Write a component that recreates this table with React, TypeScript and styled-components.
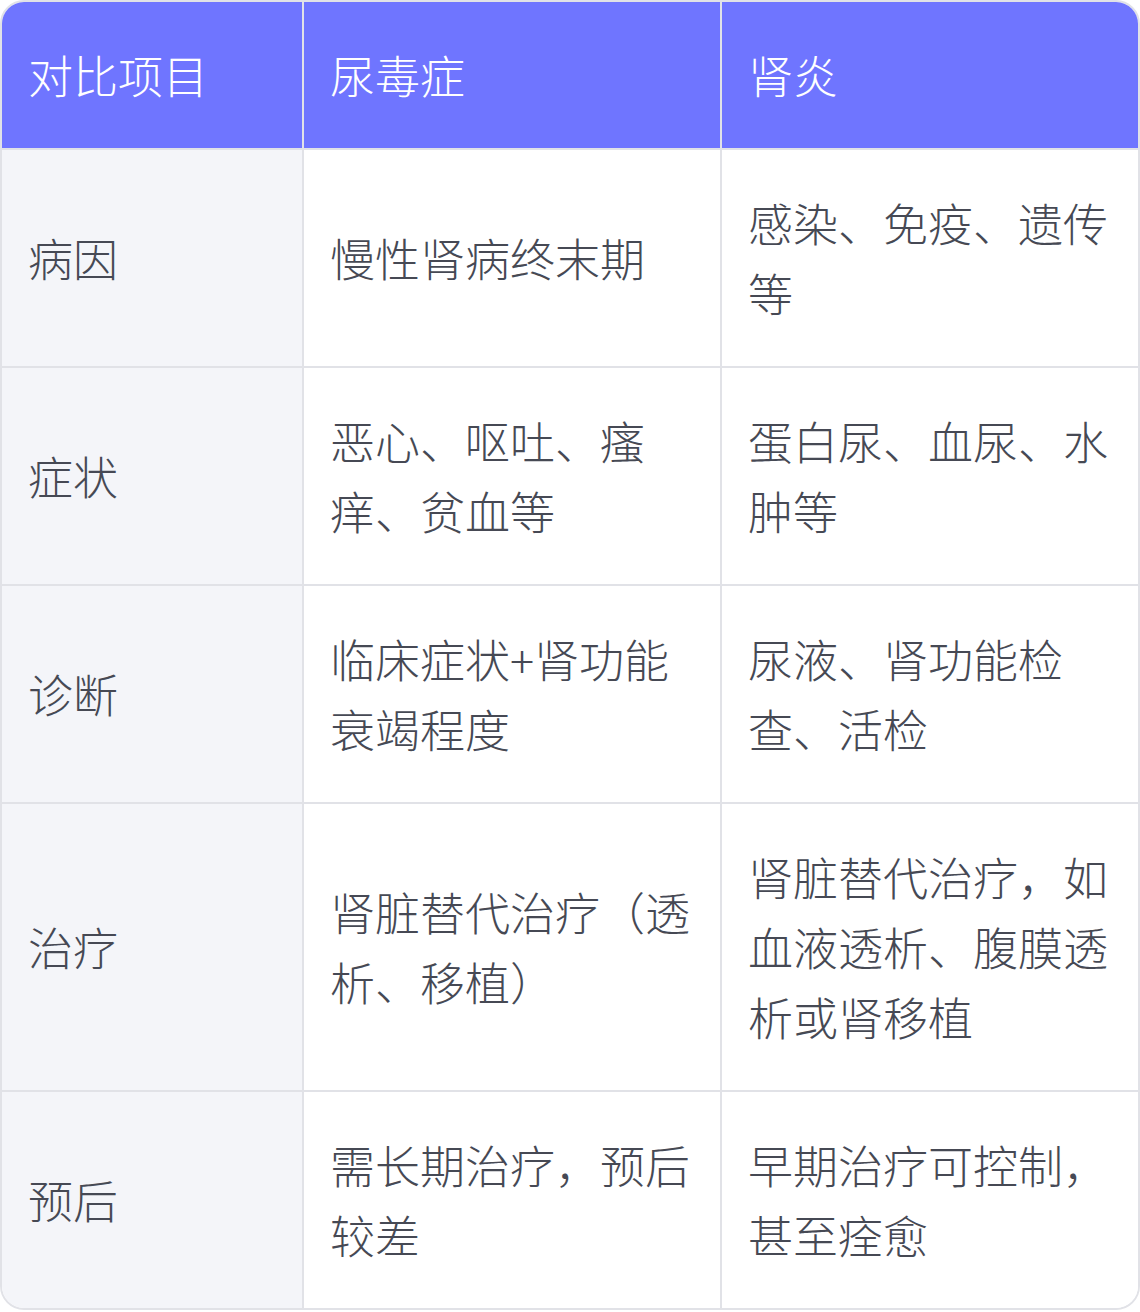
import React from "react";
import styled, { createGlobalStyle } from "styled-components";

const Global = createGlobalStyle`
  html, body { margin: 0; padding: 0; background: #ffffff; }
  body { font-family: "Noto Sans CJK SC", "Noto Sans", sans-serif; }
`;

const Table = styled.div`
  width: 1140px;
  box-sizing: border-box;
  border: 2px solid #e1e2e7;
  border-radius: 24px;
  overflow: hidden;
  display: grid;
  grid-template-columns: 302px 418px 1fr;
  background: #ffffff;
`;

const Cell = styled.div<{ $head?: boolean; $first?: boolean; $lastCol?: boolean; $lastRow?: boolean }>`
  box-sizing: border-box;
  padding: 38px 24px 38px 26px;
  display: flex;
  align-items: center;
  font-size: 45px;
  line-height: 70px;
  font-weight: 300;
  color: ${(p) => (p.$head ? "#ffffff" : "#464954")};
  background: ${(p) => (p.$head ? "#6f75ff" : p.$first ? "#f4f5f9" : "#ffffff")};
  border-right: ${(p) => (p.$lastCol ? "none" : "2px solid #e1e2e7")};
  border-bottom: ${(p) => (p.$lastRow ? "none" : "2px solid #e1e2e7")};
  word-break: normal;
  line-break: strict;
`;

const CellText = styled.span`
  display: block;
  width: 100%;
`;

const header = ["对比项目", "尿毒症", "肾炎"];
const rows: string[][] = [
  ["病因", "慢性肾病终末期", "感染、免疫、遗传等"],
  ["症状", "恶心、呕吐、瘙痒、贫血等", "蛋白尿、血尿、水肿等"],
  ["诊断", "临床症状+肾功能衰竭程度", "尿液、肾功能检查、活检"],
  ["治疗", "肾脏替代治疗（透析、移植）", "肾脏替代治疗，如血液透析、腹膜透析或肾移植"],
  ["预后", "需长期治疗，预后较差", "早期治疗可控制，甚至痊愈"],
];

export default function App() {
  return (
    <>
      <Global />
      <Table>
        {header.map((h, i) => (
          <Cell key={h} $head $lastCol={i === 2}>
            <CellText>{h}</CellText>
          </Cell>
        ))}
        {rows.map((r, ri) =>
          r.map((c, ci) => (
            <Cell
              key={`${ri}-${ci}`}
              $first={ci === 0}
              $lastCol={ci === 2}
              $lastRow={ri === rows.length - 1}
            >
              <CellText>{c}</CellText>
            </Cell>
          ))
        )}
      </Table>
    </>
  );
}
